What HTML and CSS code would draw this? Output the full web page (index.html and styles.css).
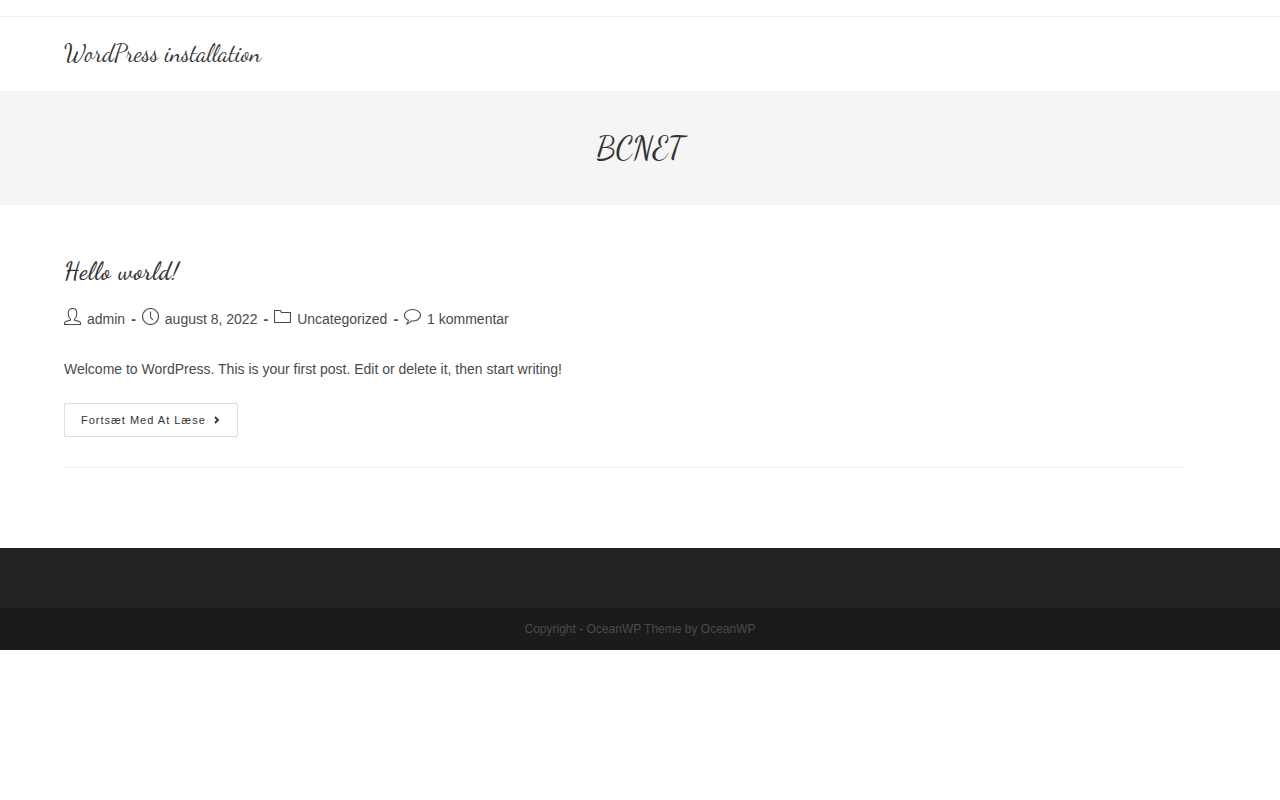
FILE: index.html
```html
<!DOCTYPE html>
<html lang="da">
<head>
    <meta charset="UTF-8">
    <meta name="viewport" content="width=device-width, initial-scale=1.0">
    <title>BCNET</title>
    <link rel="stylesheet" href="styles.css">
</head>
<body>
    <div class="top-bar"></div>
    <header class="site-header">
        <div class="container">
            <a href="#" class="site-title">WordPress installation</a>
        </div>
    </header>

    <div class="page-header">
        <h1>BCNET</h1>
    </div>

    <main class="container content">
        <article class="post">
            <h2><a href="#">Hello world!</a></h2>
            <ul class="meta">
                <li>
                    <svg class="icon" viewBox="0 0 17 17"><path d="M6.500 11.200C4.900 9.900 4.200 8 4.200 5.300C4.200 2.300 5.700 .5 8.500 .5S12.800 2.300 12.800 5.300C12.800 8 12.100 9.900 10.500 11.200V12.200L15 13.400Q16.500 13.900 16.500 15.300V16.500H.5V15.300Q.5 13.900 2 13.400L6.500 12.200Z"/></svg>
                    <a href="#">admin</a>
                </li>
                <li>
                    <svg class="icon" viewBox="0 0 17 17"><circle cx="8.500" cy="8.500" r="8"/><path d="M8.500 3.500V9L10.800 11.800"/></svg>
                    august 8, 2022
                </li>
                <li>
                    <svg class="icon" viewBox="0 0 17 17"><path d="M.5 14.500V2.500H6.500L7.500 4.500H16.500V14.500Z"/></svg>
                    <a href="#">Uncategorized</a>
                </li>
                <li>
                    <svg class="icon" viewBox="0 0 17 17"><path d="M8.500 1.500C4 1.500.5 3.900.5 7.200C.5 9.400 2 11.200 4.300 12.200C4.300 13.600 3.900 14.800 2.900 15.900C4.900 15.500 6.200 14.500 7.100 13C12.300 13.500 16.500 10.900 16.500 7.200C16.500 3.900 13 1.500 8.500 1.500Z"/></svg>
                    <a href="#">1 kommentar</a>
                </li>
            </ul>
            <p class="summary">Welcome to WordPress. This is your first post. Edit or delete it, then start writing!</p>
            <a href="#" class="readmore">Fortsæt Med At Læse
                <svg class="arrow" viewBox="0 0 6 8"><path d="M1 1L4 4L1 7"/></svg>
            </a>
        </article>
    </main>

    <footer>
        <div class="footer-widgets"></div>
        <div class="footer-bottom">Copyright - OceanWP Theme by OceanWP</div>
    </footer>
</body>
</html>
```
FILE: styles.css
```css
* {
    margin: 0;
    padding: 0;
    box-sizing: border-box;
}

body {
    font-family: "Liberation Sans", Arial, sans-serif;
    font-size: 14px;
    line-height: 25px;
    color: #4a4a4a;
    background-color: #fff;
}

a {
    color: inherit;
    text-decoration: none;
}

.container {
    padding: 0 64px;
}

.top-bar {
    height: 17px;
    border-bottom: 1px solid #f1f1f1;
}

.site-header {
    height: 75px;
    padding-top: 20px;
    border-bottom: 1px solid #f1f1f1;
}

.site-title, h1, h2 {
    font-family: "Dancing Script", "Liberation Serif", cursive;
    font-weight: 400;
    color: #333;
}

.site-title {
    display: block;
    font-size: 23.8px;
    line-height: 34px;
}

.page-header {
    height: 113px;
    padding-top: 34px;
    background-color: #f5f5f5;
    text-align: center;
}

h1 {
    font-size: 32px;
    line-height: 45px;
}

.content {
    padding-top: 50px;
    padding-right: 94px;
}

.post {
    padding-bottom: 30px;
    border-bottom: 1px solid #f1f1f1;
}

h2 {
    font-size: 24px;
    font-weight: 600;
    line-height: 34px;
    letter-spacing: 0.72px;
}

.meta {
    display: flex;
    margin-top: 18px;
    list-style: none;
}

.meta li {
    display: flex;
}

.meta li:not(:last-child)::after {
    content: "-";
    font-weight: 700;
    padding: 0 6px;
}

.icon {
    width: 17px;
    height: 17px;
    margin: 1px 6px 0 0;
    fill: none;
    stroke: #4a4a4a;
    stroke-width: 1.1;
}

.summary {
    margin: 25px 0 21px;
}

.readmore {
    display: flex;
    align-items: center;
    width: 174px;
    height: 34px;
    padding-left: 16px;
    border: 1px solid #ddd;
    border-radius: 2px;
    font-size: 11px;
    letter-spacing: 1px;
    color: #333;
}

.arrow {
    width: 6px;
    height: 8px;
    margin: 0 0 1px 8px;
    fill: none;
    stroke: #333;
    stroke-width: 1.8;
}

footer {
    margin-top: 80px;
}

.footer-widgets {
    height: 60px;
    background-color: #222;
}

.footer-bottom {
    height: 42px;
    background-color: #1b1b1b;
    font-size: 12px;
    line-height: 42px;
    text-align: center;
}
```
